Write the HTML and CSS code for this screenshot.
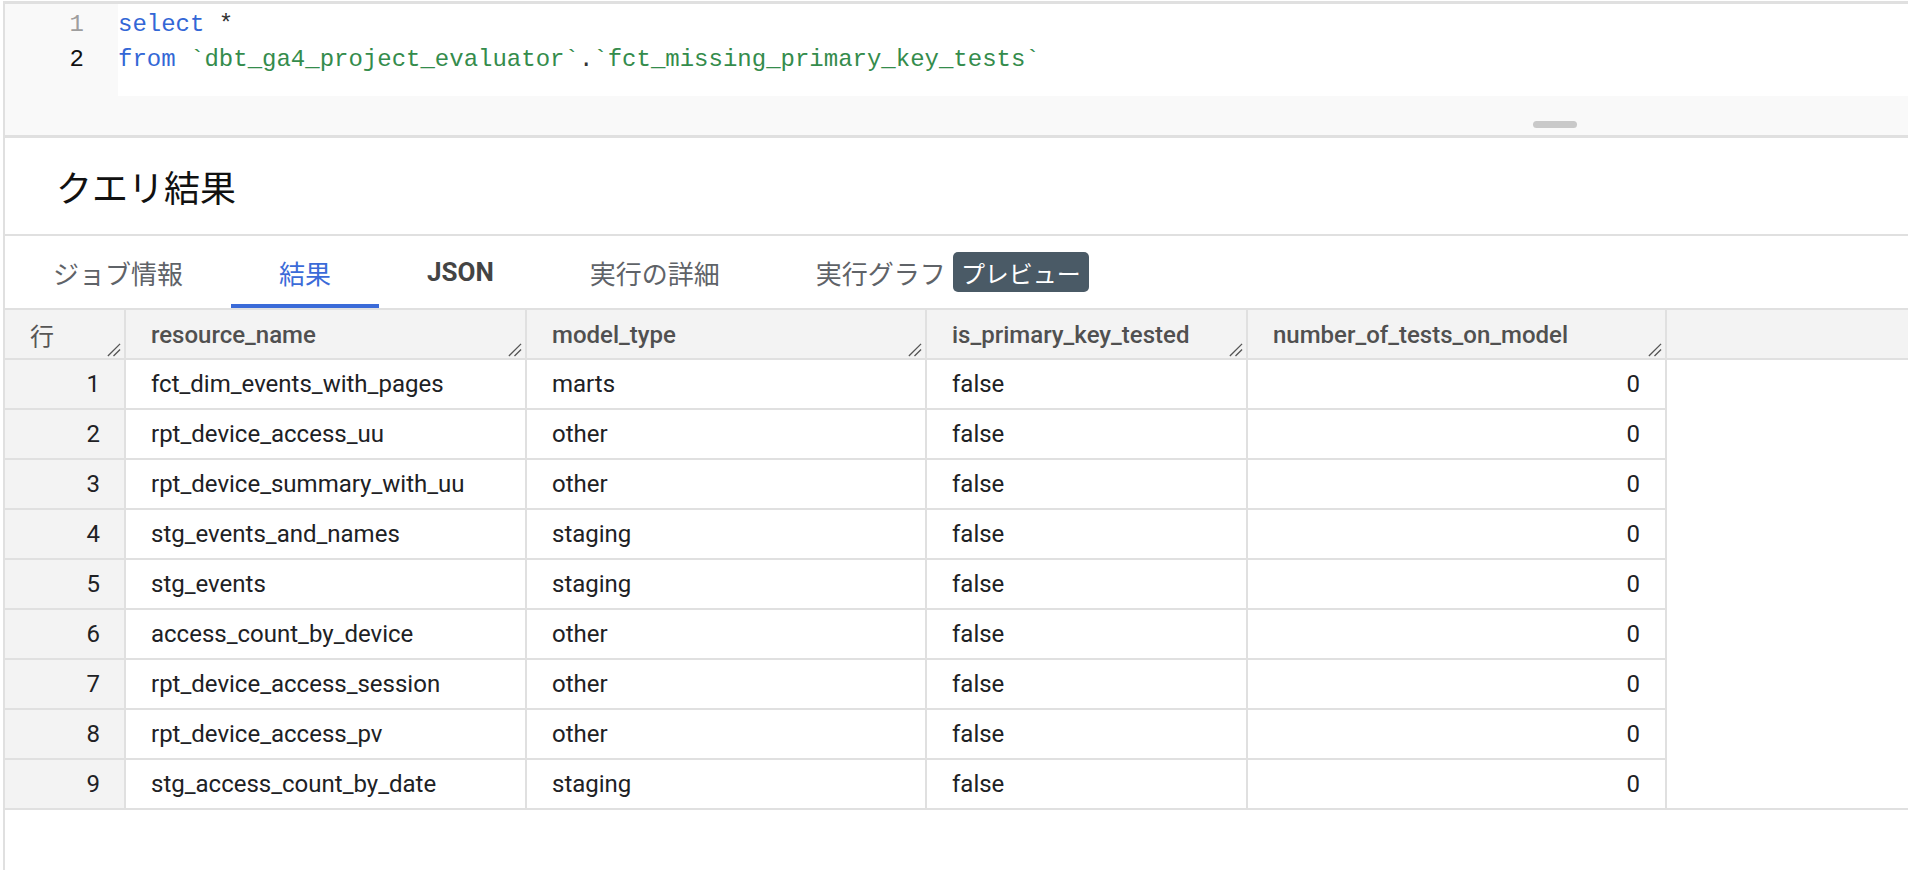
FILE: index.html
```html
<!DOCTYPE html>
<html lang="ja">
<head>
<meta charset="utf-8">
<title>クエリ結果</title>
<link rel="stylesheet" href="styles.css">
</head>
<body>
<div class="app">
  <section class="editor">
    <div class="code">
      <div class="gutter">
        <div class="ln">1</div>
        <div class="ln cur">2</div>
      </div>
      <div class="lines">
        <div class="line"><span class="kw">select</span> <span class="op">*</span></div>
        <div class="line"><span class="kw">from</span> <span class="str">`dbt_ga4_project_evaluator`</span><span class="op">.</span><span class="str">`fct_missing_primary_key_tests`</span></div>
      </div>
    </div>
    <div class="splitter"><span class="grip"></span></div>
  </section>

  <section class="results">
    <h2 class="title">クエリ結果</h2>
    <nav class="tabs">
      <div class="tab">ジョブ情報</div>
      <div class="tab active">結果</div>
      <div class="tab bold">JSON</div>
      <div class="tab">実行の詳細</div>
      <div class="tab">実行グラフ<span class="badge">プレビュー</span></div>
    </nav>

    <div class="grid">
      <div class="hrow">
        <div class="hcell c0">行<svg class="rs" viewBox="0 0 16 16"><path d="M15 2 L2 15 M15 8 L8 15"/></svg></div>
        <div class="hcell c1">resource_name<svg class="rs" viewBox="0 0 16 16"><path d="M15 2 L2 15 M15 8 L8 15"/></svg></div>
        <div class="hcell c2">model_type<svg class="rs" viewBox="0 0 16 16"><path d="M15 2 L2 15 M15 8 L8 15"/></svg></div>
        <div class="hcell c3">is_primary_key_tested<svg class="rs" viewBox="0 0 16 16"><path d="M15 2 L2 15 M15 8 L8 15"/></svg></div>
        <div class="hcell c4">number_of_tests_on_model<svg class="rs" viewBox="0 0 16 16"><path d="M15 2 L2 15 M15 8 L8 15"/></svg></div>
        <div class="hfill"></div>
      </div>
      <div class="tbody">
        <div class="row"><div class="cell c0">1</div><div class="cell c1">fct_dim_events_with_pages</div><div class="cell c2">marts</div><div class="cell c3">false</div><div class="cell c4 num">0</div></div>
        <div class="row"><div class="cell c0">2</div><div class="cell c1">rpt_device_access_uu</div><div class="cell c2">other</div><div class="cell c3">false</div><div class="cell c4 num">0</div></div>
        <div class="row"><div class="cell c0">3</div><div class="cell c1">rpt_device_summary_with_uu</div><div class="cell c2">other</div><div class="cell c3">false</div><div class="cell c4 num">0</div></div>
        <div class="row"><div class="cell c0">4</div><div class="cell c1">stg_events_and_names</div><div class="cell c2">staging</div><div class="cell c3">false</div><div class="cell c4 num">0</div></div>
        <div class="row"><div class="cell c0">5</div><div class="cell c1">stg_events</div><div class="cell c2">staging</div><div class="cell c3">false</div><div class="cell c4 num">0</div></div>
        <div class="row"><div class="cell c0">6</div><div class="cell c1">access_count_by_device</div><div class="cell c2">other</div><div class="cell c3">false</div><div class="cell c4 num">0</div></div>
        <div class="row"><div class="cell c0">7</div><div class="cell c1">rpt_device_access_session</div><div class="cell c2">other</div><div class="cell c3">false</div><div class="cell c4 num">0</div></div>
        <div class="row"><div class="cell c0">8</div><div class="cell c1">rpt_device_access_pv</div><div class="cell c2">other</div><div class="cell c3">false</div><div class="cell c4 num">0</div></div>
        <div class="row last"><div class="cell c0">9</div><div class="cell c1">stg_access_count_by_date</div><div class="cell c2">staging</div><div class="cell c3">false</div><div class="cell c4 num">0</div></div>
      </div>
    </div>
  </section>
</div>
</body>
</html>
```

FILE: styles.css
```css
* { box-sizing: border-box; }

html, body {
  margin: 0;
  padding: 0;
  background: #ffffff;
}

body {
  font-family: Roboto, "Noto Sans CJK JP", sans-serif;
  color: #202124;
  min-height: 870px;
}

.app {
  margin-left: 3px;
  margin-top: 1px;
  border-left: 2px solid #e0e0e0;
  border-top: 3px solid #e0e0e0;
  min-height: 869px;
}

/* ---------- editor ---------- */
.editor {
  border-bottom: 3px solid #e0e0e0;
}

.code {
  display: flex;
  height: 92px;
  background: #f9f9f9;
}

.gutter {
  width: 113px;
  padding: 3px 34px 0 0;
  text-align: right;
  font-family: "Liberation Mono", monospace;
  font-size: 24px;
  line-height: 35px;
  color: #9e9e9e;
}

.gutter .cur { color: #111111; }

.lines {
  flex: 1;
  background: #ffffff;
  padding-top: 3px;
  font-family: "Liberation Mono", monospace;
  font-size: 24px;
  line-height: 35px;
  color: #333333;
}

.line { white-space: pre; }

.kw { color: #3367d6; }
.str { color: #348c4c; }
.op { color: #333333; }

.splitter {
  height: 39px;
  background: #f9f9f9;
  display: flex;
  align-items: flex-end;
  padding-bottom: 7px;
}

.grip {
  display: block;
  margin-left: 1528px;
  width: 44px;
  height: 7px;
  border-radius: 4px;
  background: #c9c9c9;
}

/* ---------- results ---------- */
.title {
  margin: 0;
  height: 98px;
  padding-left: 51px;
  display: flex;
  align-items: center;
  font-family: Roboto, "Noto Sans CJK JP", sans-serif;
  font-weight: 400;
  font-size: 36px;
  color: #111111;
  border-bottom: 2px solid #e0e0e0;
}

.tabs {
  display: flex;
  height: 72px;
}

.tab {
  display: flex;
  align-items: center;
  padding: 4px 48px 0;
  font-size: 26px;
  color: #5f6368;
  border-bottom: 4px solid transparent;
}

.tab.active {
  color: #3b6bd8;
  border-bottom-color: #3b6bd8;
}

.tab.bold {
  font-weight: 700;
  color: #444444;
}

.badge {
  margin-left: 7px;
  height: 40px;
  padding: 0 8px;
  border-radius: 5px;
  background: #4a5a66;
  color: #ffffff;
  font-size: 24px;
  display: flex;
  align-items: center;
}

/* ---------- grid ---------- */
.hrow {
  display: flex;
  height: 52px;
  background: #f3f3f3;
  border-top: 2px solid #e0e0e0;
  border-bottom: 2px solid #e0e0e0;
}

.hcell {
  position: relative;
  display: flex;
  align-items: center;
  padding-left: 25px;
  padding-top: 1px;
  font-size: 24px;
  font-weight: 500;
  color: #505050;
  border-right: 2px solid #e0e0e0;
}

.hcell.c0 {
  font-weight: 400;
  color: #555555;
}

.hfill { flex: 1; }

.rs {
  position: absolute;
  right: 3px;
  bottom: 1px;
  width: 15px;
  height: 15px;
  fill: none;
  stroke: #555555;
  stroke-width: 1.4;
}

.c0 { width: 121px; }
.c1 { width: 401px; }
.c2 { width: 400px; }
.c3 { width: 321px; }
.c4 { width: 419px; }

.tbody {
  border-bottom: 2px solid #e0e0e0;
}

.row {
  display: flex;
  height: 50px;
}

.row.last { height: 48px; }

.cell {
  display: flex;
  align-items: center;
  padding-left: 25px;
  font-size: 24px;
  color: #202124;
  border-right: 2px solid #e0e0e0;
  border-bottom: 2px solid #e0e0e0;
  white-space: nowrap;
}

.row.last .cell { border-bottom: none; }

.cell.c0 {
  justify-content: flex-end;
  padding-left: 0;
  padding-right: 24px;
  background: #f3f3f3;
}

.cell.num {
  justify-content: flex-end;
  padding-left: 0;
  padding-right: 25px;
}
```
